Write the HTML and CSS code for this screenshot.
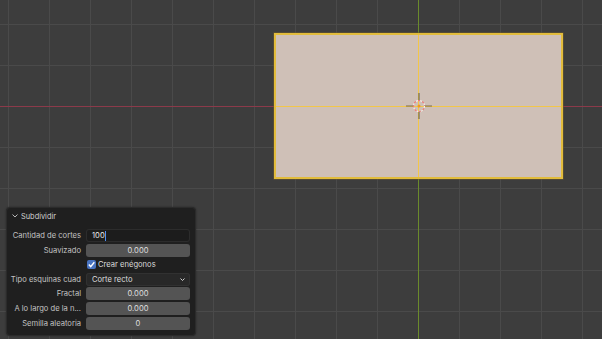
FILE: index.html
```html
<!DOCTYPE html>
<html lang="es">
<head>
    <meta charset="UTF-8">
    <title>Subdividir</title>
    <link rel="stylesheet" href="styles.css">
</head>
<body>
    <div class="viewport">
        <div class="axis axis-x"></div>
        <div class="axis axis-y"></div>

        <div class="plane">
            <div class="edge edge-v"></div>
            <div class="edge edge-h"></div>
        </div>

        <!-- cursor 3D -->
        <svg class="cursor3d" width="30" height="30" viewBox="0 0 30 30">
            <line x1="15" y1="2" x2="15" y2="10" stroke="#5e5a3e" stroke-width="1"/>
            <line x1="15" y1="20" x2="15" y2="28" stroke="#5e5a3e" stroke-width="1"/>
            <line x1="2" y1="15" x2="10" y2="15" stroke="#7a6a4a" stroke-width="1"/>
            <line x1="20" y1="15" x2="28" y2="15" stroke="#7a6a4a" stroke-width="1"/>
            <circle cx="15" cy="15" r="5.5" fill="none" stroke="#f4eeea" stroke-width="1.1" stroke-dasharray="2.2 2.2"/>
            <circle cx="15" cy="15" r="5.5" fill="none" stroke="#ee7a78" stroke-width="1.1" stroke-dasharray="2.2 2.2" stroke-dashoffset="2.2"/>
            <circle cx="15" cy="15" r="1.5" fill="#f09a20"/>
        </svg>

        <div class="panel">
            <div class="panel-head">
                <svg class="chevron" width="8" height="8" viewBox="0 0 8 8">
                    <polyline points="1.5,2.5 4,5 6.5,2.5" fill="none" stroke="#b8b8b8" stroke-width="1"/>
                </svg>
                <span>Subdividir</span>
            </div>
            <div class="props">
                <label>Cantidad de cortes</label>
                <div class="field field-edit">100<span class="caret"></span></div>

                <label>Suavizado</label>
                <div class="field">0.000</div>

                <span></span>
                <div class="check">
                    <span class="box">
                        <svg width="9" height="9" viewBox="0 0 9 9">
                            <polyline points="1.8,4.6 3.7,6.6 7.3,2.2" fill="none" stroke="#fff" stroke-width="1.4"/>
                        </svg>
                    </span>
                    Crear enégonos
                </div>

                <label>Tipo esquinas cuad</label>
                <div class="field field-menu">
                    <span>Corte recto</span>
                    <svg width="7" height="7" viewBox="0 0 7 7">
                        <polyline points="1.5,2.5 3.5,4.5 5.5,2.5" fill="none" stroke="#cfcfcf" stroke-width="1"/>
                    </svg>
                </div>

                <label>Fractal</label>
                <div class="field">0.000</div>

                <label>A lo largo de la n...</label>
                <div class="field">0.000</div>

                <label>Semilla aleatoria</label>
                <div class="field">0</div>
            </div>
        </div>
    </div>
</body>
</html>
```

FILE: styles.css
```css
body {
    margin: 0;
    background: #3d3d3d;
    font-family: Inter, "DejaVu Sans", sans-serif;
}

.viewport {
    position: relative;
    width: 602px;
    height: 339px;
    overflow: hidden;
    background-color: #3d3d3d;
    background-image:
        linear-gradient(to right, #4a4a4a 1px, transparent 1px),
        linear-gradient(to bottom, #4a4a4a 1px, transparent 1px);
    background-size: 41px 41px;
    background-position: 8px 24px;
}

.axis {
    position: absolute;
}

.axis-x {
    left: 0;
    right: 0;
    top: 105.5px;
    height: 1.5px;
    background: #8c3a4a;
}

.axis-y {
    top: 0;
    bottom: 0;
    left: 418px;
    width: 1px;
    background: #6b8a2c;
}

.plane {
    position: absolute;
    left: 274px;
    top: 33px;
    width: 285px;
    height: 142px;
    background: #cfc0b7;
    border: 2px solid #e2bc3c;
    box-shadow: 0 0 0 0.5px #6e5c2e;
}

.edge {
    position: absolute;
    background: #f2c64a;
}

.edge-v {
    left: 142px;
    top: 0;
    bottom: 0;
    width: 1px;
}

.edge-h {
    top: 71px;
    left: 0;
    right: 0;
    height: 1px;
}

.cursor3d {
    position: absolute;
    left: 403.5px;
    top: 91px;
}

.panel {
    position: absolute;
    left: 6px;
    top: 207px;
    width: 190px;
    height: 129px;
    box-sizing: border-box;
    background: #1f1f1f;
    border: 1px solid #2b2b2b;
    border-radius: 4px;
    box-shadow: 0 0 2px rgba(0, 0, 0, 0.4);
    color: #c9c9c9;
    font-size: 7.6px;
}

.panel-head {
    display: flex;
    align-items: center;
    gap: 2px;
    height: 15px;
    padding: 0 0 0 4px;
    margin-top: 0.5px;
    color: #cfcfcf;
    font-size: 7.4px;
}

.chevron {
    flex: none;
}

.props {
    display: grid;
    grid-template-columns: 73px 104px;
    grid-auto-rows: 13px;
    column-gap: 5px;
    row-gap: 1.6px;
    padding: 5.5px 0 0 1px;
}

.props label {
    text-align: right;
    line-height: 13px;
    white-space: nowrap;
    color: #c2c2c2;
}

.field {
    background: #545454;
    border-radius: 3px;
    color: #dedede;
    text-align: center;
    line-height: 13px;
}

.field-edit {
    background: #1c1c1c;
    box-shadow: inset 0 0 0 1px #2c2c2c;
    text-align: left;
    padding-left: 6px;
    color: #e6e6e6;
}

.caret {
    display: inline-block;
    width: 1px;
    height: 10px;
    margin-left: 0.5px;
    vertical-align: -2.5px;
    background: #4d90f5;
}

.field-menu {
    display: flex;
    justify-content: space-between;
    align-items: center;
    padding: 0 4px 0 6px;
    background: #282828;
    box-shadow: inset 0 0 0 1px #313131;
    text-align: left;
}

.check {
    display: flex;
    align-items: center;
    gap: 2px;
    padding-left: 1px;
    color: #dadada;
}

.box {
    display: flex;
    align-items: center;
    justify-content: center;
    width: 9px;
    height: 9px;
    border-radius: 2px;
    background: #4772c0;
}
```
